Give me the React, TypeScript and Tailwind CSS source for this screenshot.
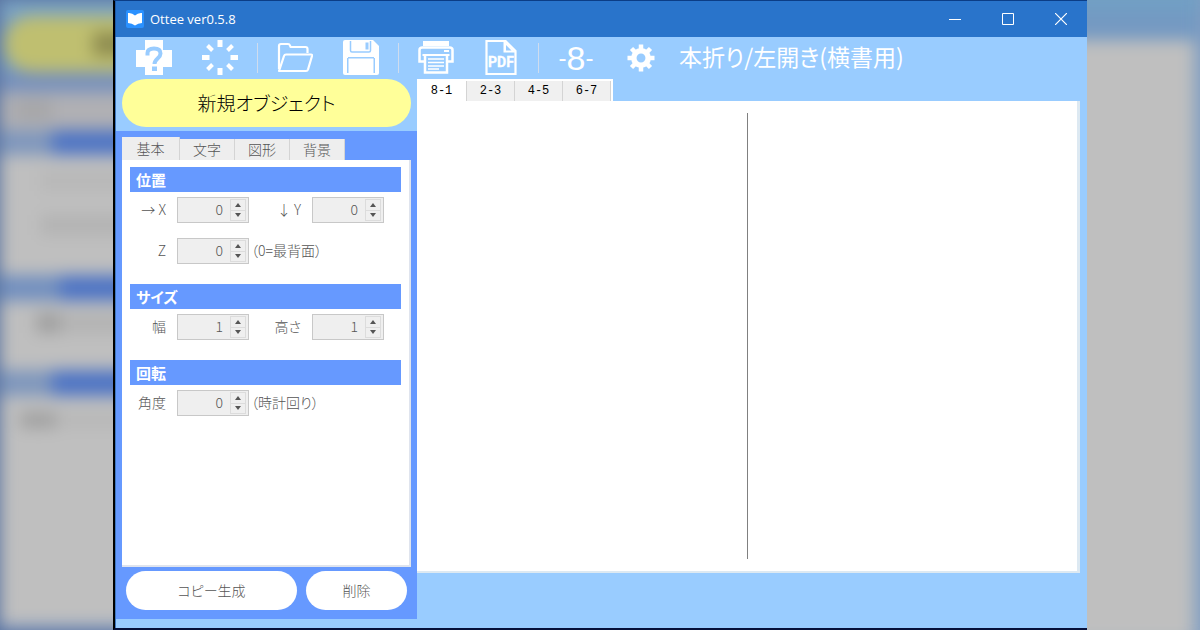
import { useState, ReactNode } from "react";

type SpinnerProps = {
  id: string;
  label: string;
  initial: number;
  min?: number;
};

const pageTabs = ["8-1", "2-3", "4-5", "6-7"];
const objectTabs = ["基本", "文字", "図形", "背景"];

function HelpIcon() {
  return (
    <svg viewBox="0 0 36 36" className="size-9">
      <path d="M9 0h18v10h9v17h-9v8H9v-8H0V10h9z" fill="white" />
      <path
        d="M11.500 15.500V13c0-3 2.500-4.500 6.500-4.500s6.500 1.700 6.500 5c0 5-6 5-6 10.500"
        fill="none"
        stroke="#99ccff"
        strokeWidth="4"
      />
      <path d="M16 26.500h5v4.500h-5z" fill="#99ccff" />
    </svg>
  );
}

function BurstIcon() {
  return (
    <svg viewBox="0 0 36 36" className="size-9" stroke="white" strokeWidth="5">
      <path d="M18 0v7M18 28v7M0 17.500h7.500M28.500 17.500H36" />
      <path d="M5.500 5.500l5 5M25.500 24.500l5 5M30.500 5.500l-5 5M10.500 24.500l-5 5" strokeWidth="4" />
    </svg>
  );
}

function FolderIcon() {
  return (
    <svg viewBox="0 0 36 36" className="size-9" fill="none" stroke="white" strokeWidth="2.200" strokeLinejoin="round">
      <path d="M2 29V6q0-2 2-2h7q1.500 0 2 1.500l.5 1.500h15q2 0 2 2v4" />
      <path d="M2 31l5-15q.5-1.500 2-1.500h25q1.300 0 1 1.500l-4 13.500q-.5 1.500-2 1.500z" />
    </svg>
  );
}

function SaveIcon() {
  return (
    <svg viewBox="0 0 36 36" className="size-9">
      <path d="M2 0h28l6 6v27q0 2-2 2H2q-2 0-2-2V2q0-2 2-2z" fill="white" />
      <path d="M7.500 1v9.500q0 1.500 1.500 1.500h17q1.500 0 1.500-1.500V1" fill="none" stroke="#99ccff" strokeWidth="1.500" />
      <path d="M22.500 2.500h3v7h-3zM5 17h26v1.500H5zM4 18h1.500v15H4zM30.500 18H32v15h-1.500z" fill="#99ccff" />
    </svg>
  );
}

function PrinterIcon() {
  return (
    <svg viewBox="0 0 36 36" className="size-9" fill="none" stroke="white">
      <path d="M5 1h26v5H5z" fill="white" stroke="none" />
      <path d="M6 21.500H1.500V10q0-2.500 3-2.500h27q3 0 3 2.500v11.500H30" strokeWidth="2.500" />
      <path d="M26 11h5" strokeWidth="2" />
      <path d="M4.500 15h27" strokeWidth="2" />
      <path d="M7 15v17.500h22V15" strokeWidth="2.500" />
      <path d="M10 19h16M10 22.500h16M10 26h16M10 29h11" strokeWidth="1.500" />
    </svg>
  );
}

function PdfIcon() {
  return (
    <svg viewBox="0 0 36 36" className="size-9">
      <path d="M3.500 1h19l10 10v23h-29z" fill="none" stroke="white" strokeWidth="2.200" />
      <path d="M20.500 0l12.500 12.500H20.500z" fill="white" />
      <path d="M23 5l5.500 5.500H23z" fill="#99ccff" />
      <text
        x="18"
        y="27"
        textAnchor="middle"
        fill="white"
        stroke="white"
        strokeWidth="0.300"
        className="font-['Liberation_Sans_Narrow','Roboto',sans-serif] text-[14px] font-bold"
      >
        PDF
      </text>
    </svg>
  );
}

function GearIcon() {
  return (
    <svg viewBox="0 0 36 36" className="size-9" fill="none" stroke="white">
      <circle cx="18" cy="18" r="7.200" strokeWidth="5.500" />
      <path
        d="M18 4.500V10M18 26v5.500M4.500 18H10M26 18h5.500M8.500 8.500l3.800 3.800M23.700 23.700l3.800 3.800M27.500 8.500l-3.800 3.800M12.300 23.700l-3.800 3.800"
        strokeWidth="4.500"
      />
    </svg>
  );
}

function ToolButton({ label, children }: { label: string; children: ReactNode }) {
  return (
    <button type="button" aria-label={label} className="flex size-9 items-center justify-center">
      {children}
    </button>
  );
}

function Divider() {
  return <span className="mx-[19px] h-[30px] w-px bg-[#cfdcee]" />;
}

function Spinner({ id, label, initial, min = 0 }: SpinnerProps) {
  const [value, setValue] = useState<number>(initial);

  return (
    <div className="flex items-center">
      <label htmlFor={id} className="mr-[11px] w-9 pb-0.5 text-right whitespace-nowrap">
        {label}
      </label>
      <div className="flex h-[26px] w-[72px] border border-[#c8c8c8] bg-[#efefef] p-px">
        <input
          id={id}
          type="number"
          min={min}
          value={value}
          onChange={(e) => setValue(Number(e.target.value))}
          className="w-full min-w-0 flex-1 appearance-none pr-[7px] pb-0.5 text-right outline-none [appearance:textfield] [&::-webkit-inner-spin-button]:appearance-none"
        />
        <div className="mr-px flex w-4 flex-col border border-[#dcdcdc]">
          <button
            type="button"
            aria-label={`${label} +`}
            onClick={() => setValue(value + 1)}
            className="flex flex-1 items-center justify-center border-b border-[#dcdcdc]"
          >
            <svg viewBox="0 0 6 4" className="h-1 w-1.5" fill="#555">
              <path d="M3 0l3 4H0z" />
            </svg>
          </button>
          <button
            type="button"
            aria-label={`${label} -`}
            onClick={() => setValue(Math.max(min, value - 1))}
            className="flex flex-1 items-center justify-center"
          >
            <svg viewBox="0 0 6 4" className="h-1 w-1.5" fill="#555">
              <path d="M0 0h6L3 4z" />
            </svg>
          </button>
        </div>
      </div>
    </div>
  );
}

function Section({ title, children }: { title: string; children: ReactNode }) {
  return (
    <section>
      <h2 className="h-[25px] bg-[#6699ff] pl-1.5 text-[15px] leading-[25px] font-bold text-white">{title}</h2>
      <div className="mt-[5px] flex flex-col gap-[15px]">{children}</div>
    </section>
  );
}

// Blurred continuation of the left panel behind the window
function LeftBackdrop() {
  return (
    <div className="overflow-hidden bg-[#5872a0]">
      <div className="-mr-5 flex h-full flex-col bg-[#bfbfbf] blur-[8px]">
        <div className="h-4 bg-[#7aa3c4]" />
        <div className="bg-[#7a9fc0]">
          <div className="ml-1 flex h-[56px] justify-end rounded-l-full bg-[#bfbf70] py-4">
            <div className="w-10 bg-[#8f8d50]" />
          </div>
        </div>
        <div className="h-5 bg-[#7690bd]" />
        <div className="h-[38px] bg-[#b0b0b4] pt-2 pl-4">
          <div className="h-5 w-9 bg-[#a6a6a8]" />
        </div>
        <div className="flex h-[25px] bg-[#7f97bd]">
          <div className="ml-[52px] flex-1 bg-[#4f75c4]" />
        </div>
        <div className="mt-4 ml-10 h-5 bg-[#b8b8b8]" />
        <div className="mt-6 ml-10 h-5 bg-[#b3b3b3]" />
        <div className="mt-10 flex h-[26px] bg-[#7390bf]">
          <div className="ml-[60px] flex-1 bg-[#4f75c4]" />
        </div>
        <div className="mt-3 ml-9 flex h-5 bg-[#b3b3b3]">
          <div className="w-6 bg-[#9f9f9f]" />
        </div>
        <div className="mt-[37px] flex h-[26px] bg-[#7f97bd]">
          <div className="ml-[52px] flex-1 bg-[#4f75c4]" />
        </div>
        <div className="mt-4 ml-5 flex h-4 bg-[#b8b8b8]">
          <div className="w-9 bg-[#a0a0a0]" />
        </div>
        <div className="mt-auto h-1.5 bg-[#8fa3c4]" />
      </div>
    </div>
  );
}

function RightBackdrop() {
  return (
    <div className="overflow-hidden bg-[#829fc2]">
      <div className="-mt-3 -ml-5 flex h-[calc(100%+1.5rem)] flex-col bg-[#bfbfbf] blur-[8px]">
        <div className="h-6 bg-[#719fc4]" />
        <div className="h-7 bg-[#7499c2]" />
        <div className="flex flex-1 justify-end">
          <div className="w-1.5 bg-[#829fc2]" />
        </div>
      </div>
    </div>
  );
}

export default function App() {
  const [page, setPage] = useState<string>("8-1");
  const [tab, setTab] = useState<string>("基本");

  return (
    <div className="grid min-h-screen grid-cols-[113fr_974fr_113fr] font-['Noto_Sans_CJK_JP',sans-serif] text-sm font-light text-[#555] [font-feature-settings:'palt']">
      <LeftBackdrop />

      <div className="flex flex-col border-t border-b-2 border-l-2 border-t-[#0b3d86] border-b-[#06103a] border-l-black">
        <header className="flex h-9 items-center border-l border-[#1d5aa8] bg-[#2974cb] text-white">
          <span className="ml-2.5 flex size-[18px] items-center justify-center rounded-xs bg-[#2b91ff]">
            <svg viewBox="0 0 16 14" className="h-3.5 w-4" fill="white">
              <path d="M1 1q4-.5 7 2.500Q11 .5 15 1v10q-4 0-7 2.500Q5 11 1 11z" />
            </svg>
          </span>
          <h1 className="ml-1.5 font-['Open_Sans',sans-serif] text-[13px] font-normal">Ottee ver0.5.8</h1>
          <div className="ml-auto flex">
            <button type="button" aria-label="最小化" className="flex h-9 w-[52px] items-center justify-center">
              <svg viewBox="0 0 12 12" className="size-3" stroke="white">
                <path d="M0 6.500h12" />
              </svg>
            </button>
            <button type="button" aria-label="最大化" className="flex h-9 w-[54px] items-center justify-center">
              <svg viewBox="0 0 12 12" className="size-3" fill="none" stroke="white">
                <path d="M.5.5h11v11H.5z" />
              </svg>
            </button>
            <button type="button" aria-label="閉じる" className="flex h-9 w-[52px] items-center justify-center">
              <svg viewBox="0 0 12 12" className="size-3" stroke="white" strokeWidth="1.200">
                <path d="M0 0l12 12M12 0L0 12" />
              </svg>
            </button>
          </div>
        </header>

        <div className="flex flex-1 flex-col border-l border-[#3f78c0] bg-[#99ccff]">
          <nav className="flex h-[42px] items-center pl-5 text-white">
            <div className="flex gap-[30px]">
              <ToolButton label="ヘルプ">
                <HelpIcon />
              </ToolButton>
              <ToolButton label="初期化">
                <BurstIcon />
              </ToolButton>
            </div>
            <Divider />
            <div className="flex gap-[30px]">
              <ToolButton label="開く">
                <FolderIcon />
              </ToolButton>
              <ToolButton label="保存">
                <SaveIcon />
              </ToolButton>
            </div>
            <Divider />
            <div className="flex gap-[29px]">
              <ToolButton label="印刷">
                <PrinterIcon />
              </ToolButton>
              <ToolButton label="PDF出力">
                <PdfIcon />
              </ToolButton>
            </div>
            <Divider />
            <div className="flex gap-[29px]">
              <button
                type="button"
                className="flex size-9 items-center justify-center font-['Liberation_Sans',sans-serif] text-[34px] leading-9 font-normal"
              >
                <span className="text-2xl">-</span>8<span className="text-2xl">-</span>
              </button>
              <ToolButton label="設定">
                <GearIcon />
              </ToolButton>
            </div>
            <p className="ml-5 pb-1 text-[23px] leading-9 font-normal whitespace-nowrap">本折り/左開き(横書用)</p>
          </nav>

          <div className="flex flex-1">
            <aside className="flex w-[301px] shrink-0 flex-col pb-[9px]">
              <button type="button" className="mx-1.5 h-12 rounded-full bg-[#ffff99] text-[19px] text-black">
                新規オブジェクト
              </button>

              <div className="mt-1 flex flex-1 flex-col bg-[#6699ff] px-1.5 pt-1.5 pb-[9px]">
                <div role="tablist" className="flex h-[23px] items-end">
                  {objectTabs.map((name) => (
                    <button
                      key={name}
                      type="button"
                      role="tab"
                      aria-selected={tab === name}
                      onClick={() => setTab(name)}
                      className={`border-r border-[#d4d4d4] bg-[#eeeeee] pb-0.5 leading-5 ${
                        tab === name ? "h-[23px] w-[58px]" : "h-[21px] w-[55px]"
                      }`}
                    >
                      {name}
                    </button>
                  ))}
                </div>

                <div className="flex flex-1 flex-col gap-5 border-r-2 border-b-2 border-[#dfe4ee] bg-white px-2 pt-[7px]">
                  <Section title="位置">
                    <div className="flex gap-4">
                      <Spinner id="x" label="→ X" initial={0} />
                      <Spinner id="y" label="↓ Y" initial={0} />
                    </div>
                    <div className="flex items-center">
                      <Spinner id="z" label="Z" initial={0} />
                      <span className="ml-0.5 pb-0.5">（0=最背面）</span>
                    </div>
                  </Section>
                  <Section title="サイズ">
                    <div className="flex gap-4">
                      <Spinner id="width" label="幅" initial={1} min={1} />
                      <Spinner id="height" label="高さ" initial={1} min={1} />
                    </div>
                  </Section>
                  <Section title="回転">
                    <div className="flex items-center">
                      <Spinner id="angle" label="角度" initial={0} />
                      <span className="ml-0.5 pb-0.5">（時計回り）</span>
                    </div>
                  </Section>
                </div>

                <div className="mt-1 flex gap-[9px] px-1">
                  <button type="button" className="h-[39px] flex-[171] rounded-full bg-white pb-0.5">
                    コピー生成
                  </button>
                  <button type="button" className="h-[39px] flex-[101] rounded-full bg-white pb-0.5">
                    削除
                  </button>
                </div>
              </div>
            </aside>

            <main className="flex flex-1 flex-col pr-[7px] pb-[55px]">
              <div
                role="tablist"
                className="flex h-[22px] items-end self-start border-t-2 border-r-2 border-white font-['Liberation_Mono',monospace] text-xs font-normal text-black"
              >
                {pageTabs.map((name) => (
                  <button
                    key={name}
                    type="button"
                    role="tab"
                    aria-selected={page === name}
                    onClick={() => setPage(name)}
                    className={`h-5 border-r border-[#d4d4d4] leading-5 ${
                      page === name ? "w-[50px] bg-white" : "w-12 bg-[#f0f0f0]"
                    }`}
                  >
                    {name}
                  </button>
                ))}
              </div>
              <div className="flex flex-1 justify-center border-r-3 border-b-2 border-[#dde9f2] bg-white py-3">
                <div className="w-px bg-[#808080]" />
              </div>
            </main>
          </div>
        </div>
      </div>

      <RightBackdrop />
    </div>
  );
}
